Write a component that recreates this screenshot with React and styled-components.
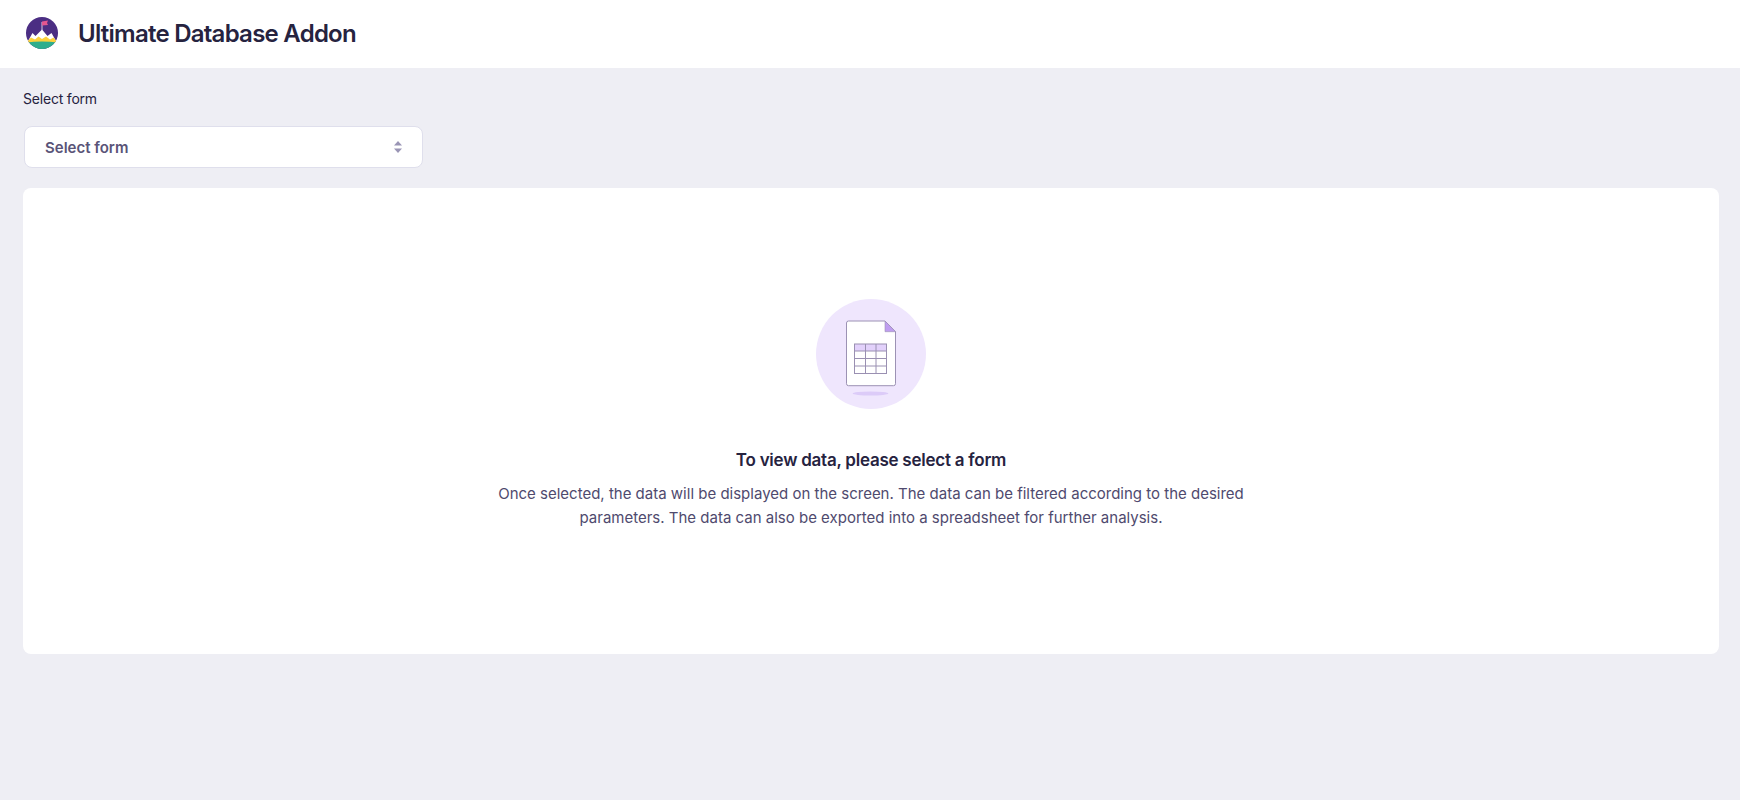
import styled, { createGlobalStyle } from 'styled-components'

const GlobalStyle = createGlobalStyle`
    html, body {
        margin: 0;
        padding: 0;
        background: #eeeef4;
        font-family: Inter, 'Liberation Sans', sans-serif;
    }
`

const Page = styled.div`
    min-height: 800px;
    background: #eeeef4;
`

const Header = styled.header`
    height: 68px;
    background: #fff;
    display: flex;
    align-items: center;
    gap: 20px;
    padding-left: 26px;
`

const LogoMark = styled.svg`
    width: 32px;
    height: 32px;
    margin-top: -2px;
`

const Title = styled.h1`
    margin: 0;
    font-size: 24px;
    line-height: 32px;
    font-weight: 600;
    letter-spacing: -0.75px;
    color: #26233f;
`

const Content = styled.main`
    padding: 20px 21px 0 23px;
`

const Label = styled.label`
    display: block;
    font-size: 14px;
    line-height: 22px;
    letter-spacing: -0.2px;
    color: #26233f;
    margin-bottom: 16px;
`

const SelectBox = styled.div`
    box-sizing: border-box;
    width: 399px;
    height: 42px;
    margin-left: 1px;
    padding: 0 20px;
    display: flex;
    align-items: center;
    justify-content: space-between;
    background: #fff;
    border: 1px solid #dfdfec;
    border-radius: 8px;
    font-size: 15px;
    font-weight: 600;
    color: #5a5478;
`

const Panel = styled.section`
    margin-top: 20px;
    height: 466px;
    background: #fff;
    border-radius: 8px;
    display: flex;
    flex-direction: column;
    align-items: center;
    padding-top: 111px;
    box-sizing: border-box;
`

const IconCircle = styled.div`
    width: 110px;
    height: 110px;
    border-radius: 50%;
    background: #efe6fd;
    display: flex;
    align-items: center;
    justify-content: center;
`

const Heading = styled.h2`
    margin: 38px 0 0;
    font-size: 17px;
    line-height: 26px;
    font-weight: 600;
    letter-spacing: -0.24px;
    color: #26233f;
`

const Description = styled.p`
    margin: 9px 0 0;
    width: 790px;
    text-align: center;
    font-size: 15px;
    line-height: 24px;
    color: #4f4a6e;
`

const Logo = () => (
    <LogoMark viewBox="0 0 32 32">
        <defs>
            <clipPath id="logo-clip">
                <circle cx="16" cy="16" r="16" />
            </clipPath>
        </defs>
        <g clipPath="url(#logo-clip)">
            <rect width="32" height="32" fill="#4b2e83" />
            <path d="M2 24 L6.5 16 L9.5 19 L16 12.5 L21.5 19 L25.5 16 L30 24 Z" fill="#fff" />
            <path d="M0 26 L5 20.5 L9 22.5 L12.5 19.5 L16 22 L20 19.5 L24 22.5 L27.5 20.5 L32 26 Z" fill="#fcd13c" />
            <path d="M0 25.5 Q16 23.5 32 25.5 V32 H0 Z" fill="#2fae8d" />
            <path d="M16 13 V5" stroke="#f7f2ff" strokeWidth="0.8" />
            <path d="M16 4.5 L22 3.5 L21 6 L22 8 L16 8.5 Z" fill="#e4578f" />
        </g>
    </LogoMark>
)

const SortArrows = () => (
    <svg width="8" height="12" viewBox="0 0 8 12">
        <path d="M4 0 L8 4.5 H0 Z" fill="#9a95b5" />
        <path d="M0 7.5 H8 L4 12 Z" fill="#9a95b5" />
    </svg>
)

const SheetIcon = () => (
    <svg width="110" height="110" viewBox="0 0 110 110">
        <ellipse cx="54.5" cy="94.5" rx="17.8" ry="2" fill="#dccbf8" />
        <path
            d="M30.5 24 a2 2 0 0 1 2 -2 H69 L79.5 32.7 V84.7 a2 2 0 0 1 -2 2 H32.5 a2 2 0 0 1 -2 -2 Z"
            fill="#fff"
            stroke="#9c92b4"
            strokeWidth="1"
        />
        <path d="M69 22 L79.5 32.7 H69 Z" fill="#bf9df0" stroke="#9c92b4" strokeWidth="0.6" />
        <rect x="38.5" y="45" width="32" height="7" fill="#e2d1fb" />
        <g stroke="#9a90b2" strokeWidth="1" fill="none">
            <rect x="38.5" y="45" width="32" height="29.5" />
            <path d="M38.5 52 H70.5 M38.5 59.5 H70.5 M38.5 67 H70.5 M49.5 45 V74.5 M60 45 V74.5" />
        </g>
    </svg>
)

const App = () => {
    return (
        <Page>
            <GlobalStyle />
            <Header>
                <Logo />
                <Title>Ultimate Database Addon</Title>
            </Header>
            <Content>
                <Label>Select form</Label>
                <SelectBox>
                    <span>Select form</span>
                    <SortArrows />
                </SelectBox>
                <Panel>
                    <IconCircle>
                        <SheetIcon />
                    </IconCircle>
                    <Heading>To view data, please select a form</Heading>
                    <Description>
                        Once selected, the data will be displayed on the screen. The data can be
                        filtered according to the desired
                        <br />
                        parameters. The data can also be exported into a spreadsheet for further
                        analysis.
                    </Description>
                </Panel>
            </Content>
        </Page>
    )
}

export default App
